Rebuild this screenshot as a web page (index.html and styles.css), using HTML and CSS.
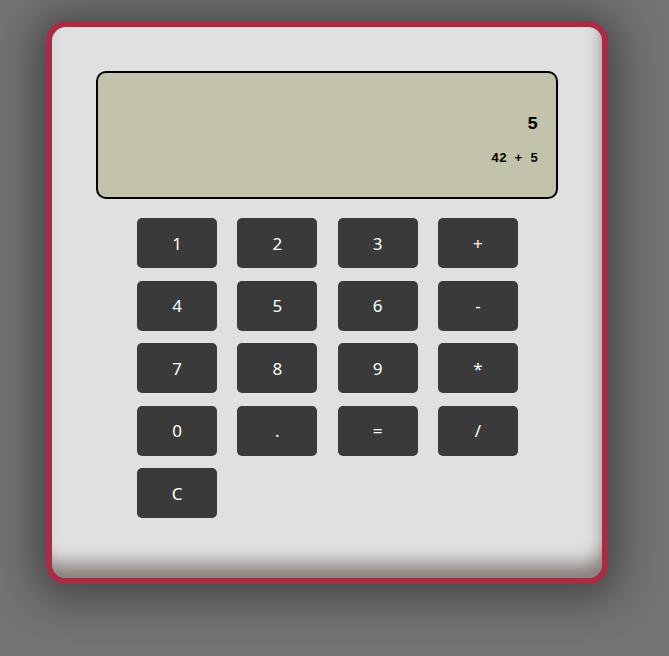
FILE: index.html
```html
<!DOCTYPE html>
<html>
<head>
<meta charset="utf-8">
<link rel="stylesheet" href="styles.css">
</head>
<body>
<div class="calc">
  <div class="display">
    <div class="result">5</div>
    <div class="expr">42 + 5</div>
  </div>
  <div class="keys">
    <button class="key">1</button>
    <button class="key">2</button>
    <button class="key">3</button>
    <button class="key">+</button>
    <button class="key">4</button>
    <button class="key">5</button>
    <button class="key">6</button>
    <button class="key">-</button>
    <button class="key">7</button>
    <button class="key">8</button>
    <button class="key">9</button>
    <button class="key">*</button>
    <button class="key">0</button>
    <button class="key">.</button>
    <button class="key">=</button>
    <button class="key">/</button>
    <button class="key">C</button>
  </div>
</div>
</body>
</html>
```
FILE: styles.css
```css
html, body {
  margin: 0;
  height: 100%;
}
body {
  background: #737373;
  padding: 21px 0 0 46px;
  box-sizing: border-box;
}
.calc {
  width: 562px;
  height: 563px;
  box-sizing: border-box;
  border: 6px solid #a72c44;
  border-radius: 20px;
  background: #e0e0e0;
  padding: 44px 44px 0 44px;
  box-shadow: inset -6px -22px 18px -8px rgba(60, 50, 40, 0.55), 0 4px 40px 12px rgba(0, 0, 0, 0.38);
}
.display {
  height: 128px;
  box-sizing: border-box;
  border: 2px solid #000;
  border-radius: 10px;
  background: #c2c3aa;
  padding: 40px 18px 0 0;
  text-align: right;
  font-family: "Liberation Mono", monospace;
  color: #000;
}
.result {
  font-size: 18px;
  font-weight: bold;
  line-height: 22px;
}
.expr {
  font-size: 13px;
  font-weight: bold;
  line-height: 16px;
  margin-top: 16px;
}
.keys {
  margin: 19px 0 0 41px;
  width: 381px;
  display: grid;
  grid-template-columns: repeat(4, 80px);
  justify-content: space-between;
  row-gap: 12.5px;
}
.key {
  width: 80px;
  height: 50px;
  border: none;
  border-radius: 5px;
  background: #3a3a3a;
  color: #fff;
  font-family: "Noto Sans", sans-serif;
  font-size: 17px;
  padding: 0;
}
```
